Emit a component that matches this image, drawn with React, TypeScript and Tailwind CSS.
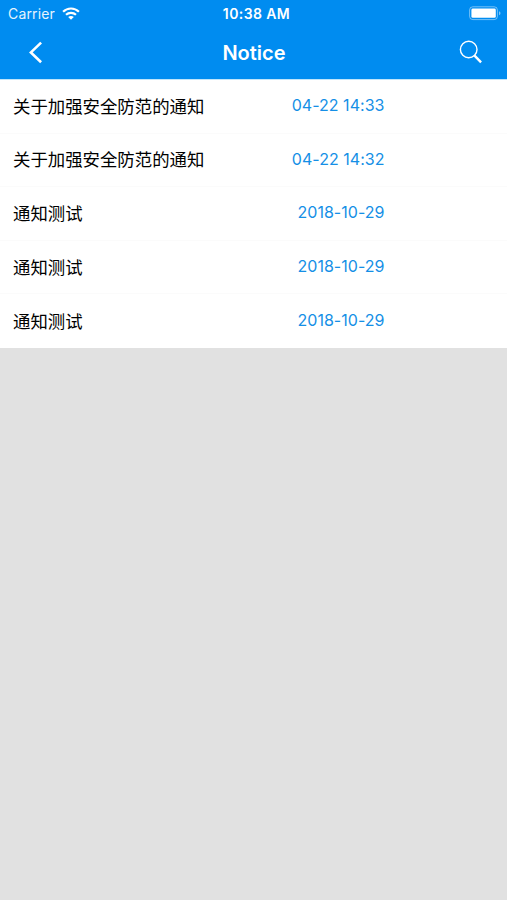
type Notice = {
  id: number
  title: string
  date: string
}

const notices: Notice[] = [
  { id: 1, title: '关于加强安全防范的通知', date: '04-22 14:33' },
  { id: 2, title: '关于加强安全防范的通知', date: '04-22 14:32' },
  { id: 3, title: '通知测试', date: '2018-10-29' },
  { id: 4, title: '通知测试', date: '2018-10-29' },
  { id: 5, title: '通知测试', date: '2018-10-29' },
]

function WifiIcon() {
  return (
    <svg className="ml-[7px] h-[13px] w-[18px]" viewBox="0 0 18 13" fill="none" stroke="white" strokeWidth="2.2">
      <path d="M1.1 4.7C5.5.4 12.5.4 16.9 4.7" />
      <path d="M4 7.8C6.8 5.2 11.2 5.2 14 7.8" />
      <path d="M6.2 10C7.8 8.6 10.2 8.6 11.8 10L9 12.8Z" fill="white" stroke="none" />
    </svg>
  )
}

function BatteryIcon() {
  return (
    <svg className="h-[15px] w-[33px]" viewBox="0 0 33 15" fill="none">
      <rect x="0.6" y="0.8" width="27.8" height="12.8" rx="3.2" stroke="white" strokeOpacity="0.45" />
      <rect x="2.4" y="2.6" width="24.4" height="9.2" rx="1.4" fill="white" />
      <path d="M30 5.2C32 6 32 8.4 30 9.2Z" fill="white" fillOpacity="0.5" />
    </svg>
  )
}

function StatusBar() {
  return (
    <div className="grid h-[27px] grid-cols-3 items-center text-white">
      <div className="flex items-center pl-2">
        <span className="text-[14px] leading-5 tracking-[0.15px] opacity-90">Carrier</span>
        <WifiIcon />
      </div>
      <span className="pl-1.5 text-center text-[14px] font-semibold leading-5 tracking-[0.4px]">10:38 AM</span>
      <div className="flex justify-end pr-[5px]">
        <BatteryIcon />
      </div>
    </div>
  )
}

function NavBar() {
  return (
    <div className="grid h-[52px] grid-cols-3 items-center text-white">
      <button className="ml-7 w-4" aria-label="Back">
        <svg className="h-6 w-4" viewBox="0 0 16 24" fill="none" stroke="white" strokeWidth="2.6">
          <path d="M13.1 1.6 2.9 11.4l10.2 9.8" />
        </svg>
      </button>
      <h1 className="pl-px text-center text-[20px] font-semibold leading-7">Notice</h1>
      <button className="mr-6 justify-self-end" aria-label="Search">
        <svg className="h-6 w-6 overflow-visible" viewBox="0 0 24 24" fill="none" stroke="white">
          <circle cx="9.7" cy="8.5" r="8.3" strokeWidth="1.4" />
          <path d="m15.3 14.4 6.8 6.9" strokeWidth="2.4" />
        </svg>
      </button>
    </div>
  )
}

export default function App() {
  return (
    <div className="min-h-screen bg-[#e1e1e1] font-['Inter','Noto_Sans_CJK_SC',sans-serif]">
      <header className="h-[79px] bg-[#008cf0]">
        <StatusBar />
        <NavBar />
      </header>

      <ul className="border-t border-[#bfe5fb] bg-white">
        {notices.map((notice) => (
          <li
            key={notice.id}
            className="flex h-[53.6px] items-center justify-between border-b border-[#fbfbfb] pl-[13px] pr-[122.5px] last:border-b-0"
          >
            <span className="pt-px text-[17.4px] leading-6 text-black">{notice.title}</span>
            <span className="pb-[2px] text-[16px] leading-6 tracking-[0.03px] text-[#158fe6]">{notice.date}</span>
          </li>
        ))}
      </ul>
    </div>
  )
}
